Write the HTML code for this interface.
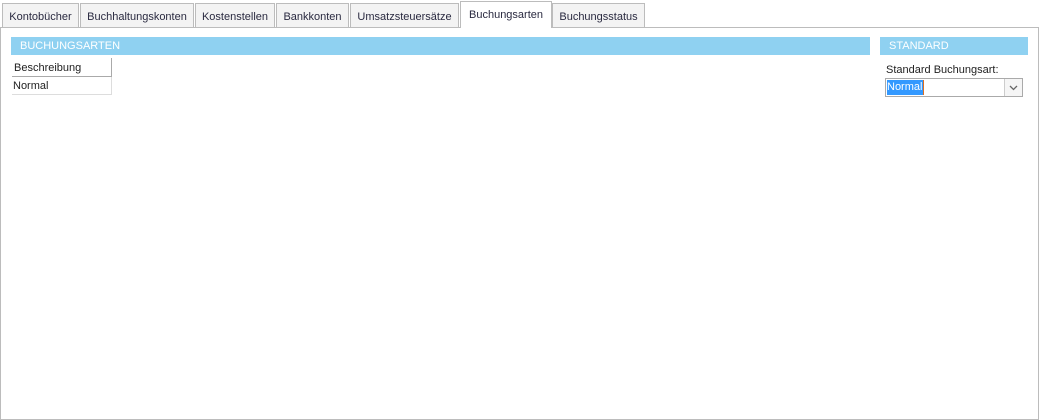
<!DOCTYPE html>
<html><head><meta charset="utf-8"><style>
body{margin:0;width:1039px;height:420px;background:#fff;font-family:"Liberation Sans",sans-serif;font-size:11px;color:#222;position:relative;overflow:hidden}
.tab{position:absolute;top:3px;height:24px;border:1px solid #bcbcbc;border-bottom:none;background:#f3f3f3;box-sizing:border-box;text-align:center;line-height:26px;color:#2a2a40}
.tab.a{top:1px;height:27px;background:#fff;line-height:27px;z-index:2}
.panel{position:absolute;left:0;top:27px;width:1039px;height:393px;border:1px solid #bcbcbc;box-sizing:border-box}
.bar{position:absolute;height:18px;background:#8fd1f1;color:#fff;line-height:19px;padding-left:9px;box-sizing:border-box;font-size:11px}
</style></head><body>
<div class="panel"></div>
<div class="tab" style="left:2px;width:77px">Kontobücher</div>
<div class="tab" style="left:80px;width:114px">Buchhaltungskonten</div>
<div class="tab" style="left:195px;width:80px">Kostenstellen</div>
<div class="tab" style="left:276px;width:73px">Bankkonten</div>
<div class="tab" style="left:350px;width:109px">Umsatzsteuersätze</div>
<div class="tab a" style="left:460px;width:92px">Buchungsarten</div>
<div class="tab" style="left:552px;width:93px">Buchungsstatus</div>
<div class="bar" style="left:11px;top:37px;width:859px">BUCHUNGSARTEN</div>
<div class="bar" style="left:880px;top:37px;width:148px">STANDARD</div>
<div style="position:absolute;left:12px;top:58px;width:100px;height:19px;border-right:1px solid #aaa;border-bottom:1px solid #aaa;box-sizing:border-box;line-height:20px;padding-left:2px">Beschreibung</div>
<div style="position:absolute;left:12px;top:77px;width:100px;height:18px;border-right:1px solid #ddd;border-bottom:1px solid #ddd;box-sizing:border-box;line-height:18px;padding-left:1px">Normal</div>
<div style="position:absolute;left:886px;top:63px;line-height:14px">Standard Buchungsart:</div>
<div style="position:absolute;left:885px;top:78px;width:138px;height:19px;border:1px solid #aaa;box-sizing:border-box">
<span style="position:absolute;left:1px;top:1px;height:15px;line-height:15px;background:#3399ff;color:#fff;padding-right:1px;border-right:1px solid #e07020">Normal</span>
<div style="position:absolute;right:0;top:0;width:17px;height:17px;border-left:1px solid #ccc;background:#f5f5f5"><svg width="17" height="17"><path d="M5 7l3.5 3.5L12 7" fill="none" stroke="#666" stroke-width="1.3"/></svg></div>
</div>
</body></html>
